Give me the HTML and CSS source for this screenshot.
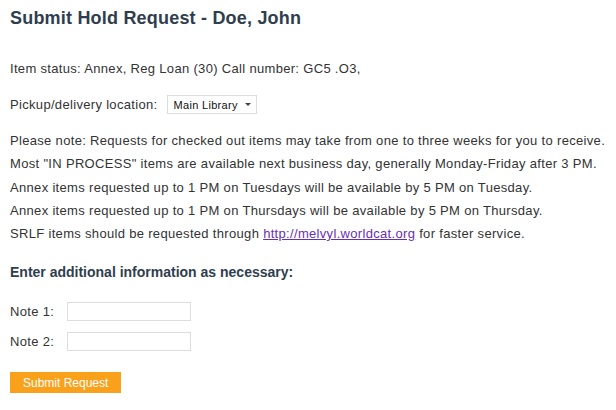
FILE: index.html
```html
<!DOCTYPE html>
<html lang="en">
<head>
    <meta charset="UTF-8">
    <title>Submit Hold Request</title>
    <link rel="stylesheet" href="styles.css">
</head>
<body>
    <div id="hold-request">
        <h1 class="title">Submit Hold Request - Doe, John</h1>

        <p class="item-status">Item status: Annex, Reg Loan (30) Call number: GC5 .O3,</p>

        <div class="pickup">
            <label for="pickup-location">Pickup/delivery location:</label>
            <span class="select-box" id="pickup-location">Main Library <span class="caret"></span></span>
        </div>

        <div class="notes">
            <p>Please note: Requests for checked out items may take from one to three weeks for you to receive.</p>
            <p>Most "IN PROCESS" items are available next business day, generally Monday-Friday after 3 PM.</p>
            <p>Annex items requested up to 1 PM on Tuesdays will be available by 5 PM on Tuesday.</p>
            <p>Annex items requested up to 1 PM on Thursdays will be available by 5 PM on Thursday.</p>
            <p>SRLF items should be requested through <a href="#">http://melvyl.worldcat.org</a> for faster service.</p>
        </div>

        <h2 class="subtitle">Enter additional information as necessary:</h2>

        <div class="note-row">
            <label for="note1">Note 1:</label>
            <input type="text" id="note1">
        </div>
        <div class="note-row">
            <label for="note2">Note 2:</label>
            <input type="text" id="note2">
        </div>

        <button class="submit">Submit Request</button>
    </div>
</body>
</html>
```

FILE: styles.css
```css
body {
    font-family: Arial, "Liberation Sans", sans-serif;
    font-size: 13px;
    letter-spacing: 0.32px;
    color: #333;
    margin: 0;
    background: #fff;
}

#hold-request {
    padding: 8px 0 0 10px;
    white-space: nowrap;
}

.title {
    font-size: 18px;
    font-weight: bold;
    letter-spacing: 0.2px;
    color: #2f3e4e;
    margin: 0 0 32px 0;
}

.item-status {
    margin: 0 0 19px 0;
}

.pickup {
    display: flex;
    align-items: center;
    gap: 10px;
    margin-bottom: 15px;
}

.select-box {
    display: inline-flex;
    align-items: center;
    gap: 7px;
    height: 17px;
    padding: 0 5px;
    border: 1px solid #ddd;
    font-size: 11px;
    color: #111;
    background: #fff;
}

.caret {
    width: 0;
    height: 0;
    border-left: 3px solid transparent;
    border-right: 3px solid transparent;
    border-top: 3px solid #444;
}

.notes p {
    margin: 0;
    line-height: 23.25px;
}

.notes a {
    color: #6a2fb0;
}

.subtitle {
    font-size: 14px;
    font-weight: bold;
    letter-spacing: 0;
    color: #2f3e4e;
    margin: 19px 0 22px 0;
}

.note-row {
    display: flex;
    align-items: center;
    gap: 13px;
    margin-bottom: 11px;
}

.note-row input {
    width: 120px;
    height: 15px;
    border: 1px solid #ddd;
    padding: 1px;
    margin: 0;
}

.submit {
    margin-top: 10px;
    background: #f9a11b;
    color: #fff;
    border: none;
    font-family: Arial, "Liberation Sans", sans-serif;
    font-size: 12px;
    padding: 4px 13px;
    height: 21px;
}
```
